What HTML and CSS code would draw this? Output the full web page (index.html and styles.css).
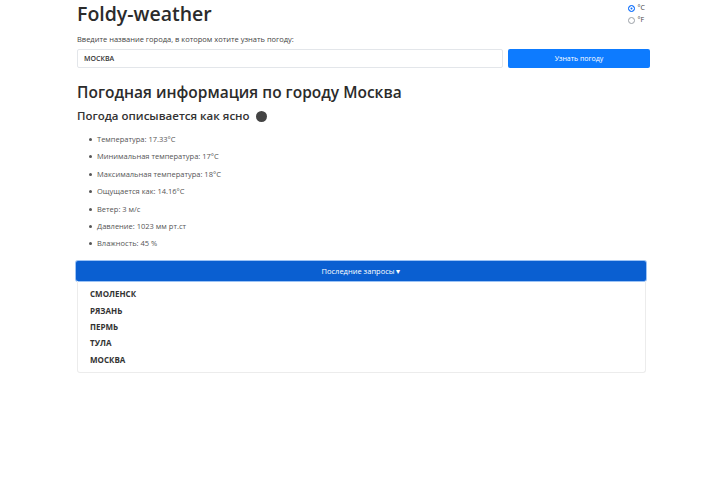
FILE: index.html
```html
<!DOCTYPE html>
<html lang="ru">
<head>
<meta charset="utf-8">
<title>Foldy-weather</title>
<link rel="stylesheet" href="styles.css">
</head>
<body>
<div class="container">
  <header class="header">
    <h1 class="title">Foldy-weather</h1>
    <div class="units">
      <label class="unit"><span class="radio radio-on"></span>°C</label>
      <label class="unit"><span class="radio"></span>°F</label>
    </div>
  </header>
  <form class="search">
    <label class="search-label">Введите название города, в котором хотите узнать погоду:</label>
    <div class="search-row">
      <div class="input">МОСКВА</div>
      <button type="button" class="btn">Узнать погоду</button>
    </div>
  </form>
  <h2 class="city">Погодная информация по городу Москва</h2>
  <h3 class="desc">Погода описывается как ясно <span class="dot"></span></h3>
  <ul class="facts">
    <li>Температура: 17.33°C</li>
    <li>Минимальная температура: 17°C</li>
    <li>Максимальная температура: 18°C</li>
    <li>Ощущается как: 14.16°C</li>
    <li>Ветер: 3 м/с</li>
    <li>Давление: 1023 мм рт.ст</li>
    <li>Влажность: 45 %</li>
  </ul>
  <div class="history">
    <div class="history-btn">Последние запросы ▾</div>
    <div class="history-card">
      <div class="history-item">СМОЛЕНСК</div>
      <div class="history-item">РЯЗАНЬ</div>
      <div class="history-item">ПЕРМЬ</div>
      <div class="history-item">ТУЛА</div>
      <div class="history-item">МОСКВА</div>
    </div>
  </div>
</div>
</body>
</html>
```

FILE: styles.css
```css
* { box-sizing: border-box; }
html, body { margin: 0; padding: 0; background: #fff; }
body {
  font-family: "Open Sans", "Noto Sans", sans-serif;
  color: #212529;
}
.container {
  margin-left: 77px;
  width: 573px;
  padding-top: 1px;
}
.header {
  display: flex;
  justify-content: space-between;
  align-items: flex-start;
}
.title {
  margin: 0;
  font-size: 19.5px;
  font-weight: 600;
  line-height: 26px;
  color: #2b2b2b;
}
.units {
  display: flex;
  flex-direction: column;
  gap: 2px;
  margin-right: 5px;
  padding-top: 2px;
}
.unit {
  display: flex;
  align-items: center;
  gap: 3px;
  font-size: 7px;
  line-height: 10px;
  color: #444;
}
.radio {
  width: 7px;
  height: 7px;
  border-radius: 50%;
  border: 1px solid #9aa0a6;
  background: #fff;
}
.radio-on {
  border-color: #0d6efd;
  background: #0d6efd;
  box-shadow: inset 0 0 0 1.5px #fff;
}
.search { margin-top: 7px; }
.search-label {
  display: block;
  font-size: 7.5px;
  line-height: 10px;
  color: #444;
}
.search-row {
  display: flex;
  gap: 5px;
  margin-top: 5px;
}
.input {
  flex: 1;
  height: 19px;
  border: 1px solid #e3e6ea;
  border-radius: 2px;
  padding: 0 6px;
  font-size: 7px;
  line-height: 17px;
  font-weight: 600;
  color: #333;
}
.btn {
  width: 142px;
  height: 19px;
  border: none;
  border-radius: 2px;
  background: #0d7bff;
  color: #fff;
  font-family: inherit;
  font-size: 7px;
  padding: 0;
}
.city {
  margin: 14px 0 0;
  font-size: 15.5px;
  font-weight: 600;
  line-height: 20px;
  color: #2b2b2b;
}
.desc {
  margin: 6px 0 0;
  font-size: 11.5px;
  font-weight: 600;
  line-height: 16px;
  display: flex;
  align-items: center;
  gap: 6px;
  color: #333;
}
.dot {
  width: 11px;
  height: 11px;
  border-radius: 50%;
  background: #444;
}
.facts {
  margin: 10px 0 0;
  padding-left: 20px;
  list-style: none;
}
.facts li {
  position: relative;
  font-size: 7.5px;
  line-height: 10px;
  margin-bottom: 7.4px;
  color: #555;
}
.facts li::before {
  content: "";
  position: absolute;
  left: -8px;
  top: 4px;
  width: 3px;
  height: 3px;
  border-radius: 50%;
  background: #555;
}
.history {
  margin-top: 13px;
  width: 570px;
  margin-left: -1px;
}
.history-btn {
  height: 20px;
  background: #0a5fd1;
  border-radius: 2px;
  box-shadow: 0 0 0 1px #9cc3f5;
  color: #fff;
  font-size: 7.5px;
  line-height: 20px;
  text-align: center;
}
.history-card {
  margin-left: 1px;
  border: 1px solid #ececec;
  border-top: none;
  border-radius: 0 0 3px 3px;
  padding: 8px 12px 6px;
  height: 92px;
}
.history-item {
  font-size: 8px;
  font-weight: 700;
  line-height: 10px;
  margin-bottom: 6.3px;
  color: #333;
}
```
